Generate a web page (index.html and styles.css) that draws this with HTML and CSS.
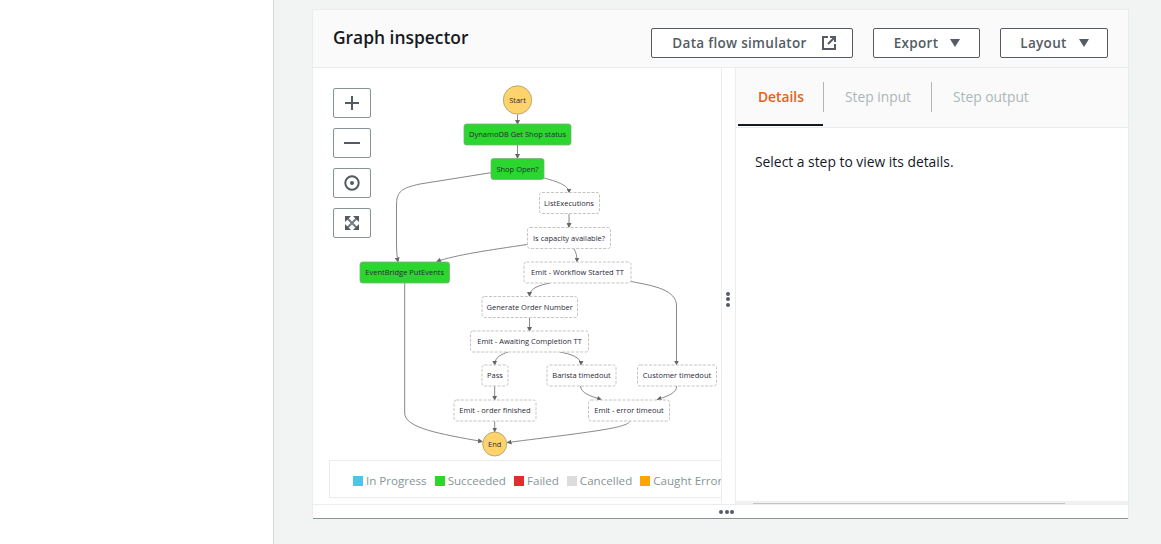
FILE: index.html
```html
<!DOCTYPE html>
<html lang="en">
<head>
<meta charset="utf-8">
<title>Graph inspector</title>
<link rel="stylesheet" href="styles.css">
</head>
<body>
<aside class="sidebar"></aside>
<main class="main">
  <section class="card">
    <header class="card-header">
      <h2 class="card-title">Graph inspector</h2>
      <div class="actions">
        <button class="btn btn-sim" type="button">Data flow simulator
          <svg class="ext-icon" viewBox="0 0 16 16" width="16" height="16"><path class="ic-line" d="M7 2H2v12h12V9"/><path class="ic-line" d="M9 2h5v5M14 2 7 9"/></svg>
        </button>
        <button class="btn btn-export" type="button">Export <span class="caret"></span></button>
        <button class="btn btn-layout" type="button">Layout <span class="caret"></span></button>
      </div>
    </header>
    <div class="work">
      <div class="graph-pane">
        <svg class="graph" viewBox="313 68 408 436" width="408" height="436">
          <defs>
            <marker id="arr" markerWidth="5" markerHeight="5" refX="4" refY="2.5" orient="auto" markerUnits="userSpaceOnUse">
              <path class="arrow" d="M0 0 L5 2.5 L0 5 Z"/>
            </marker>
          </defs>
          <g class="edges">
            <path marker-end="url(#arr)" d="M517.5 114.5V124"/>
            <path marker-end="url(#arr)" d="M517.5 145V158"/>
            <path marker-end="url(#arr)" d="M491 172.7L420 184C402 188 396.5 191 396.5 205L396.5 245Q396.5 255 398 261.5"/>
            <path marker-end="url(#arr)" d="M544 178C555 181 569 185 569 192.5"/>
            <path marker-end="url(#arr)" d="M569 214V227"/>
            <path marker-end="url(#arr)" d="M527 244.5C490 250 455 255 437 261.5"/>
            <path marker-end="url(#arr)" d="M574 249C576 252 577 256 577 261.5"/>
            <path marker-end="url(#arr)" d="M550 283C540 285 529.5 288 529.5 296"/>
            <path marker-end="url(#arr)" d="M631 281.5C655 286 676.5 290 676.5 306L676.5 364.5"/>
            <path marker-end="url(#arr)" d="M529.5 317V331"/>
            <path marker-end="url(#arr)" d="M508 352C502 354 494.7 357 494.7 364.7"/>
            <path marker-end="url(#arr)" d="M560 352C570 354 581 357 581 364.7"/>
            <path marker-end="url(#arr)" d="M494.7 386V399.7"/>
            <path marker-end="url(#arr)" d="M580.5 386C581 393 590 396 601 399.5"/>
            <path marker-end="url(#arr)" d="M676.7 386C676.7 393 668 396 657.5 399.5"/>
            <path marker-end="url(#arr)" d="M494.7 421V431.5"/>
            <path marker-end="url(#arr)" d="M404.7 283L404.7 413C404.7 428 440 434 482 441.5"/>
            <path marker-end="url(#arr)" d="M630 421C628 428 590 432 507.5 442.5"/>
          </g>
          <circle class="terminal" cx="517.5" cy="100" r="14.2"/>
          <text class="label" x="517.5" y="100">Start</text>
          <rect class="done" x="464" y="124" width="107" height="21" rx="2.5"/>
          <text class="label" x="517.5" y="134">DynamoDB Get Shop status</text>
          <rect class="done" x="491" y="158.5" width="53" height="21" rx="2.5"/>
          <text class="label" x="517.5" y="168.5">Shop Open?</text>
          <rect class="idle" x="539.5" y="192.5" width="60" height="21" rx="2.5"/>
          <text class="label" x="569" y="202.5">ListExecutions</text>
          <rect class="idle" x="527.5" y="227.5" width="83" height="21" rx="2.5"/>
          <text class="label" x="569" y="237.5">Is capacity available?</text>
          <rect class="done" x="360" y="262" width="89.5" height="21" rx="2.5"/>
          <text class="label" x="404.7" y="272">EventBridge PutEvents</text>
          <rect class="idle" x="524" y="262" width="107" height="21" rx="2.5"/>
          <text class="label" x="577.5" y="272">Emit - Workflow Started TT</text>
          <rect class="idle" x="482" y="296.5" width="95.5" height="21" rx="2.5"/>
          <text class="label" x="529.7" y="306.5">Generate Order Number</text>
          <rect class="idle" x="470.5" y="331" width="118" height="21" rx="2.5"/>
          <text class="label" x="529.5" y="341">Emit - Awaiting Completion TT</text>
          <rect class="idle" x="482" y="365" width="26" height="21" rx="2.5"/>
          <text class="label" x="495" y="375">Pass</text>
          <rect class="idle" x="547" y="365" width="69" height="21" rx="2.5"/>
          <text class="label" x="581.5" y="375">Barista timedout</text>
          <rect class="idle" x="637.5" y="365" width="79" height="21" rx="2.5"/>
          <text class="label" x="677" y="375">Customer timedout</text>
          <rect class="idle" x="454" y="400" width="82" height="21" rx="2.5"/>
          <text class="label" x="495" y="410">Emit - order finished</text>
          <rect class="idle" x="588.5" y="400" width="81" height="21" rx="2.5"/>
          <text class="label" x="629" y="410">Emit - error timeout</text>
          <circle class="terminal" cx="494.7" cy="444" r="12"/>
          <text class="label" x="494.7" y="443.5">End</text>
        </svg>
        <div class="zoom-tools">
          <button class="tool" type="button" aria-label="Zoom in"><svg viewBox="0 0 16 16" width="16" height="16"><path class="ic-line" d="M8 1v14M1 8h14"/></svg></button>
          <button class="tool" type="button" aria-label="Zoom out"><svg viewBox="0 0 16 16" width="16" height="16"><path class="ic-line" d="M0 8h16"/></svg></button>
          <button class="tool" type="button" aria-label="Center"><svg viewBox="0 0 16 16" width="16" height="16"><circle class="ic-line" cx="8" cy="8" r="6.7"/><circle class="ic-fill" cx="8" cy="8" r="2"/></svg></button>
          <button class="tool" type="button" aria-label="Fit"><svg viewBox="0 0 16 16" width="16" height="16"><path class="ic-fill" d="M1 1h6L1 7zM15 1H9l6 6zM1 15h6l-6-6zM15 15H9l6-6z"/><path class="ic-diag" d="M3 3l10 10M13 3 3 13"/></svg></button>
        </div>
        <ul class="legend">
          <li class="legend-item"><span class="swatch sw-progress"></span>In Progress</li>
          <li class="legend-item"><span class="swatch sw-success"></span>Succeeded</li>
          <li class="legend-item"><span class="swatch sw-failed"></span>Failed</li>
          <li class="legend-item"><span class="swatch sw-cancelled"></span>Cancelled</li>
          <li class="legend-item"><span class="swatch sw-caught"></span>Caught Error</li>
        </ul>
      </div>
      <div class="v-handle"><i class="dot"></i><i class="dot"></i><i class="dot"></i></div>
      <div class="details">
        <nav class="tabs">
          <a class="tab tab-active">Details</a>
          <a class="tab tab-sep">Step input</a>
          <a class="tab tab-sep">Step output</a>
        </nav>
        <p class="hint">Select a step to view its details.</p>
        <div class="scrollbar"><div class="thumb"></div></div>
      </div>
    </div>
    <div class="h-handle"><i class="dot"></i><i class="dot"></i><i class="dot"></i></div>
  </section>
</main>
</body>
</html>
```
FILE: styles.css
```css
* { box-sizing: border-box; }
html, body { margin: 0; height: 544px; overflow: hidden; }
body {
  display: flex;
  background: #f2f3f3;
  font-family: "Open Sans", "Noto Sans", sans-serif;
  color: #16191f;
}
.sidebar { width: 274px; flex: none; background: #fff; border-right: 1px solid #d5dbdb; }
.main { flex: 1; padding: 9px 32px 0 38px; }
.card {
  height: 510px;
  background: #fff;
  border: 1px solid #eaeded;
  border-bottom: 0;
  display: flex;
  flex-direction: column;
}
.card-header {
  height: 58px;
  flex: none;
  display: flex;
  justify-content: space-between;
  background: #fafafa;
  border-bottom: 1px solid #eaeded;
  padding: 16px 20px 0 20px;
}
.card-title { margin: 0; font-size: 17.4px; line-height: 22px; font-weight: 600; color: #16191f; }
.actions { display: flex; gap: 20px; padding-top: 2px; }
.btn {
  height: 30px;
  display: flex;
  align-items: center;
  justify-content: center;
  background: #fff;
  border: 1px solid #545b64;
  border-radius: 2px;
  font: 600 13.5px "Open Sans", sans-serif;
  letter-spacing: 0.3px;
  color: #545b64;
  padding: 0;
}
.btn-sim { width: 202px; gap: 14px; padding-left: 5px; }
.btn-export { width: 107px; gap: 12px; padding-left: 1px; }
.btn-layout { width: 108px; gap: 12px; padding-left: 1px; }
.ext-icon { display: block; }
.caret {
  width: 0;
  height: 0;
  border-left: 5.5px solid transparent;
  border-right: 5.5px solid transparent;
  border-top: 8px solid #545b64;
}
.ic-line { fill: none; stroke: #545b64; stroke-width: 2; }
.ic-fill { fill: #545b64; }
.ic-diag { fill: none; stroke: #545b64; stroke-width: 2; opacity: 0.8; }
.work { flex: 1; min-height: 0; display: flex; }
.graph-pane {
  width: 408px;
  flex: none;
  position: relative;
  overflow: hidden;
  display: flex;
  flex-direction: column;
  padding: 20px 0 6px 20px;
  background: #fff;
}
.graph { position: absolute; left: 0; top: 0; }
.zoom-tools { position: relative; display: flex; flex-direction: column; gap: 10px; width: 38px; }
.tool {
  width: 38px;
  height: 30px;
  display: flex;
  align-items: center;
  justify-content: center;
  padding: 0;
  background: #fff;
  border: 1px solid #879596;
  border-radius: 2px;
}
.edges path { fill: none; stroke: #888; stroke-width: 1; }
.arrow { fill: #666; }
.terminal { fill: #ffd36b; stroke: #a89a6e; stroke-width: 0.8; }
.done { fill: #2bd62e; stroke: #7fae7f; stroke-width: 0.8; }
.idle { fill: #fff; stroke: #c4c4c4; stroke-width: 1; stroke-dasharray: 3 1.5; }
.label {
  font-family: "Open Sans", sans-serif;
  font-size: 7.5px;
  fill: #2a2a3a;
  text-anchor: middle;
  dominant-baseline: central;
}
.legend {
  position: relative;
  margin: auto -60px 0 -4px;
  padding: 3px 0 0 23px;
  height: 38px;
  list-style: none;
  display: flex;
  align-items: center;
  flex: none;
  border: 1px solid #eaeded;
  border-right: 0;
  background: #fff;
  font-size: 11.6px;
  color: #879596;
  white-space: nowrap;
  gap: 8px;
}
.legend-item { display: flex; align-items: center; gap: 3px; }
.swatch { width: 10px; height: 10px; flex: none; }
.sw-progress { background: #4fc3ea; }
.sw-success { background: #2bd62e; }
.sw-failed { background: #e02d2d; }
.sw-cancelled { background: #dcdcdc; }
.sw-caught { background: #ffa500; }
.v-handle {
  width: 15px;
  flex: none;
  background: #fff;
  border-left: 1px solid #eaeded;
  border-right: 1px solid #eaeded;
  display: flex;
  flex-direction: column;
  align-items: center;
  justify-content: center;
  gap: 1.5px;
  padding: 26px 2px 0 0;
}
.dot { display: block; width: 4px; height: 4px; border-radius: 50%; background: #545b64; }
.details { flex: 1; min-width: 0; display: flex; flex-direction: column; }
.tabs {
  height: 60px;
  flex: none;
  display: flex;
  background: #fafafa;
  border-bottom: 1px solid #eaeded;
  padding: 14px 0 0 2px;
  font-size: 13.8px;
  font-weight: 500;
  color: #aab7b8;
}
.tab { display: block; height: 30px; line-height: 30px; padding: 0 20px; }
.tab-active { width: 85px; color: #ec5f11; font-weight: 600; position: relative; }
.tab-active::after {
  content: "";
  position: absolute;
  left: 0;
  right: 0;
  top: 42px;
  height: 2px;
  background: #16191f;
}
.tab-sep { border-left: 1px solid #aab7b8; padding: 0 20px 0 21px; }
.hint { flex: 1; margin: 0; padding: 24px 20px 0 19px; font-size: 13.85px; line-height: 20px; color: #16191f; }
.scrollbar { height: 3px; flex: none; background: #f0f0f0; padding: 1.5px 63px 0 17px; }
.thumb { height: 1px; background: #c4c4c4; }
.h-handle {
  height: 15px;
  flex: none;
  background: #fff;
  border-top: 1px solid #eaeded;
  border-bottom: 1px solid #879596;
  display: flex;
  align-items: center;
  justify-content: flex-end;
  gap: 1.5px;
  padding-right: 394px;
}
```
